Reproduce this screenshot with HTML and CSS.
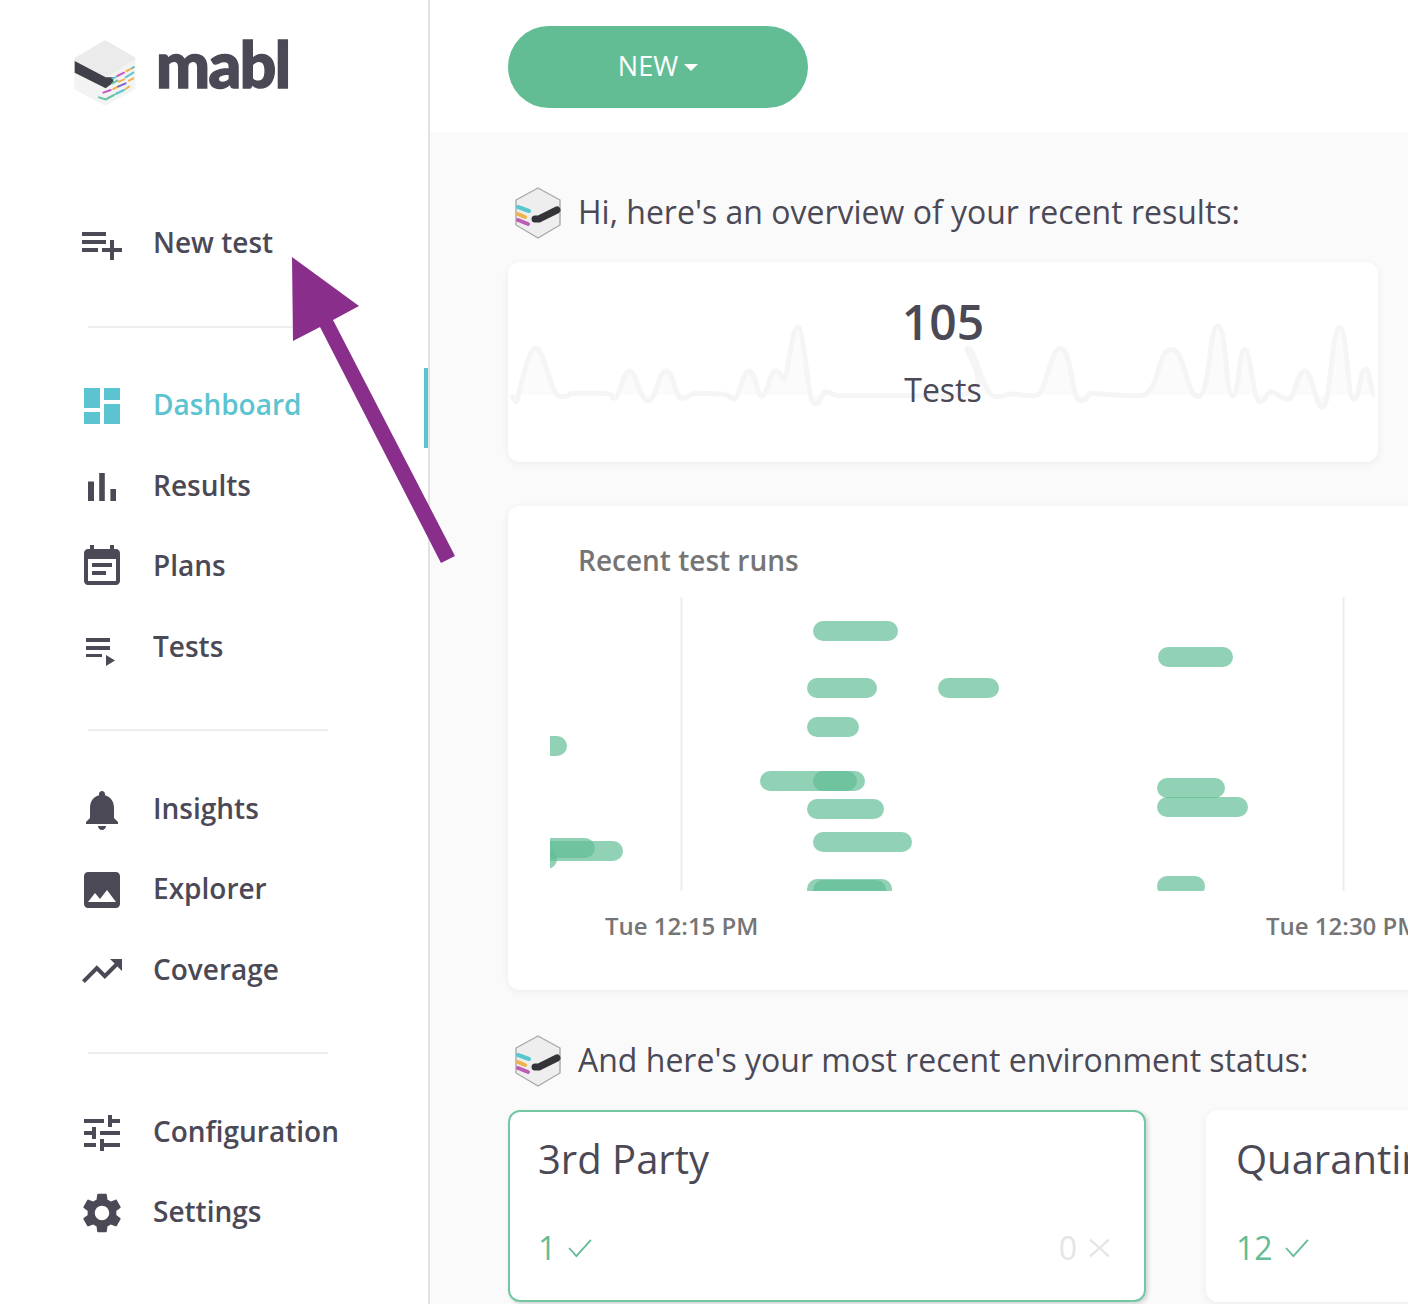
FILE: index.html
```html
<!DOCTYPE html>
<html lang="en">
<head>
<meta charset="utf-8">
<title>mabl dashboard</title>
<link rel="stylesheet" href="styles.css">
</head>
<body>
<div class="app">
  <aside class="sidebar">
    <div class="brand">
      <svg class="brand-cube" viewBox="40 60 186 198">
        <path class="cube-body" d="M133 65 220 115V205L133 253 45 205V115Z" stroke-linejoin="round"/>
        <path class="cube-top" d="M133 65 220 115 133 170 45 120Z" stroke-linejoin="round"/>
        <path class="cube-band" d="M42 123 135 172H158V188L135 205 42 158Z"/>
        <g class="dashes" stroke-width="6" stroke-linecap="round">
          <path stroke="#c95bc1" d="M170 168 190 158M128 218 150 210"/>
          <path stroke="#f2b24c" d="M198 153 208 148M175 185 190 178M205 182 218 175M158 207 168 202M195 207 205 200"/>
          <path stroke="#66c2a0" d="M213 145 220 141M155 190 170 182M115 232 135 238 160 225"/>
          <path stroke="#5cc6d0" d="M155 175 165 172M195 172 218 158M165 222 190 210"/>
          <path stroke="#7a66cc" d="M172 200 195 190"/>
        </g>
      </svg>
      <span class="brand-name">mabl</span>
    </div>

    <nav class="nav">
      <a class="nav-item"><svg class="nav-icon" viewBox="0 0 24 24"><path d="M14 10H2v2h12v-2zm0-4H2v2h12V6zm4 8v-4h-2v4h-4v2h4v4h2v-4h4v-2h-4zM2 16h8v-2H2v2z"/></svg><span>New test</span></a>
      <div class="nav-divider"></div>
      <a class="nav-item active"><svg class="nav-icon" viewBox="0 0 24 24"><path d="M3 13h8V3H3v10zm0 8h8v-6H3v6zm10 0h8V11h-8v10zm0-18v6h8V3h-8z"/></svg><span>Dashboard</span></a>
      <a class="nav-item"><svg class="nav-icon" viewBox="0 0 24 24"><path d="M5 9.2h3V19H5zM10.6 5h2.8v14h-2.8zm5.6 8H19v6h-2.8z"/></svg><span>Results</span></a>
      <a class="nav-item"><svg class="nav-icon" viewBox="0 0 24 24"><path d="M17 10H7v2h10v-2zm2-7h-1V1h-2v2H8V1H6v2H5c-1.11 0-1.99.9-1.99 2L3 19c0 1.1.89 2 2 2h14c1.1 0 2-.9 2-2V5c0-1.1-.9-2-2-2zm0 16H5V8h14v11zm-5-5H7v2h7v-2z"/></svg><span>Plans</span></a>
      <a class="nav-item"><svg class="nav-icon" viewBox="0 0 48 48"><path d="M8 14h24v4H8zM8 22h24v4H8zM8 30h16v3H8zM28 31l9 5.5-9 5.5z"/></svg><span>Tests</span></a>
      <div class="nav-divider"></div>
      <a class="nav-item"><svg class="nav-icon" viewBox="0 0 24 24"><path d="M12 22c1.1 0 2-.9 2-2h-4c0 1.1.89 2 2 2zm6-6v-5c0-3.07-1.64-5.64-4.5-6.32V4c0-.83-.67-1.5-1.5-1.5s-1.5.67-1.5 1.5v.68C7.63 5.36 6 7.92 6 11v5l-2 2v1h16v-1l-2-2z"/></svg><span>Insights</span></a>
      <a class="nav-item"><svg class="nav-icon" viewBox="0 0 24 24"><path d="M21 19V5c0-1.1-.9-2-2-2H5c-1.1 0-2 .9-2 2v14c0 1.1.9 2 2 2h14c1.1 0 2-.9 2-2zM8.5 13.5l2.5 3.01L14.5 12l4.5 6H5l3.5-4.5z"/></svg><span>Explorer</span></a>
      <a class="nav-item"><svg class="nav-icon" viewBox="0 0 24 24"><path d="M16 6l2.29 2.29-4.88 4.88-4-4L2 16.59 3.41 18l6-6 4 4 6.3-6.29L22 12V6z"/></svg><span>Coverage</span></a>
      <div class="nav-divider"></div>
      <a class="nav-item"><svg class="nav-icon" viewBox="0 0 24 24"><path d="M3 17v2h6v-2H3zM3 5v2h10V5H3zm10 16v-2h8v-2h-8v-2h-2v6h2zM7 9v2H3v2h4v2h2V9H7zm14 4v-2H11v2h10zm-6-4h2V7h4V5h-4V3h-2v6z"/></svg><span>Configuration</span></a>
      <a class="nav-item"><svg class="nav-icon" viewBox="0 0 24 24"><path d="M19.14 12.94c.04-.3.06-.61.06-.94 0-.32-.02-.64-.07-.94l2.03-1.58c.18-.14.23-.41.12-.61l-1.92-3.32c-.12-.22-.37-.29-.59-.22l-2.39.96c-.5-.38-1.03-.7-1.62-.94l-.36-2.54c-.04-.24-.24-.41-.48-.41h-3.84c-.24 0-.43.17-.47.41l-.36 2.54c-.59.24-1.13.57-1.62.94l-2.39-.96c-.22-.08-.47 0-.59.22L2.74 8.87c-.12.21-.08.47.12.61l2.03 1.58c-.05.3-.09.63-.09.94s.02.64.07.94l-2.03 1.58c-.18.14-.23.41-.12.61l1.92 3.32c.12.22.37.29.59.22l2.39-.96c.5.38 1.03.7 1.62.94l.36 2.54c.05.24.24.41.48.41h3.84c.24 0 .44-.17.47-.41l.36-2.54c.59-.24 1.13-.56 1.62-.94l2.39.96c.22.08.47 0 .59-.22l1.92-3.32c.12-.22.07-.47-.12-.61l-2.01-1.58zM12 15.6c-1.98 0-3.6-1.62-3.6-3.6s1.62-3.6 3.6-3.6 3.6 1.62 3.6 3.6-1.62 3.6-3.6 3.6z"/></svg><span>Settings</span></a>
    </nav>
  </aside>

  <main class="main">
    <header class="topbar">
      <button class="new-btn"><span class="new-label">NEW</span><span class="caret"></span></button>
    </header>

    <section class="content">
      <div class="greeting">
        <svg class="mascot" viewBox="0 0 46 52">
          <path class="mascot-hex" d="M23 1 45 13V38L23 51 1 38V13Z" stroke-linejoin="round"/>
          <g fill="none" stroke-linecap="round">
            <path stroke="#5cc6d0" stroke-width="4" d="M3 20 14 24"/>
            <path stroke="#f2b24c" stroke-width="4" d="M3 27 10 30"/>
            <path stroke="#c05bb5" stroke-width="4" d="M3 33 13 37"/>
            <path stroke="#333338" stroke-width="7" d="M20 32H24L42 23"/>
          </g>
        </svg>
        <h2>Hi, here's an overview of your recent results:</h2>
      </div>

      <div class="card summary">
        <svg class="spark" viewBox="0 0 1568 510" preserveAspectRatio="none">
          <path class="spark-line" d="M12 285S16 305 20 305S39 145 55 145S80 290 100 290S111 280 120 280S150 280 175 280S186 295 195 295S210 213 222 213S240 302 255 302S273 213 287 213S302 295 315 295S329 280 340 280S365 282 385 282S398 297 408 297S423 213 435 213S448 288 458 288S471 213 482 213S490 235 497 235S511 80 522 80S539 312 552 312S563 275 572 275S585 287 595 287S700 287 795 287S812 145 825 145S852 290 875 290S889 282 900 282S925 287 945 287S970 145 990 145S1009 302 1025 302S1036 280 1045 280S1092 287 1130 287S1161 148 1187 148S1213 290 1235 290S1254 78 1270 78S1284 288 1296 288S1308 148 1318 148S1333 305 1345 305S1356 275 1365 275S1382 297 1395 297S1411 213 1425 213S1443 322 1457 322S1473 82 1487 82S1501 298 1512 298S1523 208 1533 208S1542 285 1550 285"/>
        </svg>
        <div class="summary-num">105</div>
        <div class="summary-label">Tests</div>
      </div>

      <div class="card runs">
        <h3>Recent test runs</h3>
        <svg class="runs-chart" width="858" height="294" viewBox="550 597 858 294">
          <path class="grid" d="M681.5 597V891M1343.5 597V891"/>
          <g class="run-bars">
            <rect x="813" y="621" width="85" height="20" rx="10"/>
            <rect x="807" y="678" width="70" height="20" rx="10"/>
            <rect x="938" y="678" width="61" height="20" rx="10"/>
            <rect x="807" y="717" width="52" height="20" rx="10"/>
            <rect x="530" y="736" width="37" height="20" rx="10"/>
            <rect x="760" y="771" width="105" height="20" rx="10"/>
            <rect x="813" y="771" width="44" height="20" rx="10"/>
            <rect x="807" y="799" width="77" height="20" rx="10"/>
            <rect x="813" y="832" width="99" height="20" rx="10"/>
            <rect x="530" y="838" width="65" height="20" rx="10"/>
            <rect x="530" y="841" width="93" height="20" rx="10"/>
            <rect x="530" y="849" width="27" height="20" rx="10"/>
            <rect x="807" y="879" width="85" height="20" rx="10"/>
            <rect x="813" y="880" width="73" height="20" rx="10"/>
            <rect x="1158" y="647" width="75" height="20" rx="10"/>
            <rect x="1157" y="778" width="68" height="20" rx="10"/>
            <rect x="1157" y="797" width="91" height="20" rx="10"/>
            <rect x="1157" y="876" width="48" height="20" rx="10"/>
          </g>
        </svg>
        <div class="axis">
          <span class="tick first">Tue 12:15 PM</span>
          <span class="tick second">Tue 12:30 PM</span>
        </div>
      </div>

      <div class="greeting second-greeting">
        <svg class="mascot" viewBox="0 0 46 52">
          <path class="mascot-hex" d="M23 1 45 13V38L23 51 1 38V13Z" stroke-linejoin="round"/>
          <g fill="none" stroke-linecap="round">
            <path stroke="#5cc6d0" stroke-width="4" d="M3 20 14 24"/>
            <path stroke="#f2b24c" stroke-width="4" d="M3 27 10 30"/>
            <path stroke="#c05bb5" stroke-width="4" d="M3 33 13 37"/>
            <path stroke="#333338" stroke-width="7" d="M20 32H24L42 23"/>
          </g>
        </svg>
        <h2>And here's your most recent environment status:</h2>
      </div>

      <div class="envs">
        <div class="card env selected">
          <div class="env-name">3rd Party</div>
          <div class="env-counts">
            <span class="pass">1<svg class="mark" viewBox="0 0 26 22"><path d="M1 11 9 20 25 2"/></svg></span>
            <span class="fail">0<svg class="mark" viewBox="0 0 20 18"><path d="M1 1 19 17M19 1 1 17"/></svg></span>
          </div>
        </div>
        <div class="card env">
          <div class="env-name">Quarantine</div>
          <div class="env-counts">
            <span class="pass">12<svg class="mark" viewBox="0 0 26 22"><path d="M1 11 9 20 25 2"/></svg></span>
          </div>
        </div>
      </div>
    </section>
  </main>
</div>

<svg class="arrow" width="170" height="320" viewBox="290 250 170 320">
  <path d="M292 257 359 306 333 320 455 556 441 563 320 327 293 341Z"/>
</svg>
</body>
</html>
```

FILE: styles.css
```css
* { box-sizing: border-box; }

html, body {
  margin: 0;
  height: 1304px;
  overflow: hidden;
  background: #fff;
  color: #4b4956;
  font-family: "Open Sans", sans-serif;
}

.app {
  display: flex;
  height: 1304px;
}

/* Sidebar */
.sidebar {
  flex: 0 0 430px;
  border-right: 2px solid #e2e2e2;
  background: #fff;
}

.brand {
  display: flex;
  align-items: flex-start;
  gap: 20px;
  height: 134px;
  padding: 40px 0 0 74px;
}

.brand-cube { width: 62px; height: 66px; flex: none; }
.cube-body { fill: #f3f3f3; stroke: #f3f3f3; stroke-width: 8; }
.cube-top { fill: #ebebeb; stroke: #ebebeb; stroke-width: 8; }
.cube-band { fill: #40404a; }
.dashes { fill: none; }

.brand-name {
  margin-top: -8px;
  font-family: Lato, sans-serif;
  font-weight: 900;
  font-size: 64px;
  line-height: 64px;
  letter-spacing: -1.5px;
  -webkit-text-stroke: 1.5px #4b4956;
  color: #4b4956;
}

.nav {
  display: flex;
  flex-direction: column;
  padding-top: 70px;
}

.nav-item {
  display: flex;
  align-items: center;
  gap: 27px;
  height: 80.67px;
  padding-left: 78px;
  font-size: 28px;
  font-weight: 600;
  color: #4b4956;
  position: relative;
}

.nav-item span { position: relative; top: -2px; }

.nav-icon {
  width: 48px;
  height: 48px;
  flex: none;
  fill: #4b4956;
}

.nav-item.active { color: #5cc4d0; }
.nav-item.active .nav-icon { fill: #5cc4d0; }
.nav-item.active::after {
  content: "";
  position: absolute;
  right: 0;
  top: 2px;
  width: 4px;
  height: 80px;
  background: #5cc4d0;
}

.nav-divider {
  width: 240px;
  height: 2px;
  margin: 41px 0 38px 88px;
  background: #eeeeee;
  flex: none;
}

/* Main */
.main {
  flex: 1;
  min-width: 0;
  overflow: hidden;
  display: flex;
  flex-direction: column;
}

.topbar {
  flex: 0 0 132px;
  padding: 26px 0 0 78px;
  background: #fff;
}

.new-btn {
  display: flex;
  align-items: center;
  justify-content: center;
  gap: 6px;
  width: 300px;
  height: 82px;
  border: 0;
  border-radius: 41px;
  background: #62bd95;
  color: #fff;
  font-family: "Open Sans", sans-serif;
  font-size: 27px;
  font-weight: 400;
}

.new-label { position: relative; top: -2px; }

.caret {
  width: 0;
  height: 0;
  border-left: 7px solid transparent;
  border-right: 7px solid transparent;
  border-top: 7px solid #fff;
}

.content {
  flex: 1;
  padding: 55px 0 0 78px;
  background: #fafafa;
}

.greeting {
  display: flex;
  align-items: center;
  gap: 17px;
  height: 52px;
  padding-left: 7px;
  margin-bottom: 23px;
}

.second-greeting { margin-top: 45px; }

.mascot { width: 46px; height: 52px; flex: none; }
.mascot-hex { fill: #eeeeee; stroke: #a9a9a9; stroke-width: 1.4; }

.greeting h2 {
  margin: -2px 0 0;
  font-size: 32px;
  font-weight: 400;
  line-height: 52px;
  white-space: nowrap;
  color: #4b4956;
}

.card {
  background: #fff;
  border-radius: 12px;
  box-shadow: 0 2px 8px rgba(0, 0, 0, .06);
}

.summary {
  position: relative;
  width: 870px;
  height: 200px;
  text-align: center;
}

.spark {
  position: absolute;
  left: -3px;
  top: 38px;
  width: 880px;
  height: 170px;
}

.spark-line {
  fill: #fbfbfb;
  stroke: #f5f5f5;
  stroke-width: 5px;
  stroke-linejoin: round;
  vector-effect: non-scaling-stroke;
}

.summary-num {
  position: relative;
  padding-top: 27px;
  font-size: 48px;
  line-height: 66px;
  font-weight: 600;
}

.summary-label {
  position: relative;
  margin-top: 13px;
  font-size: 32px;
  line-height: 44px;
}

.runs {
  width: 1000px;
  height: 484px;
  margin-top: 44px;
  padding-top: 34px;
}

.runs h3 {
  margin: 0 0 0 70px;
  font-size: 28px;
  line-height: 40px;
  font-weight: 600;
  color: #757575;
}

.runs-chart {
  display: block;
  margin: 17px 0 0 42px;
}

.grid { stroke: #eeeeee; stroke-width: 2; fill: none; }
.run-bars rect { fill: #62bd95; opacity: .7; }

.axis {
  position: relative;
  height: 40px;
  margin-top: 15px;
}

.tick {
  position: absolute;
  top: 0;
  font-size: 24px;
  line-height: 40px;
  font-weight: 600;
  color: #757575;
  white-space: nowrap;
}

.tick.first { left: 97px; }
.tick.second { left: 758px; }

.envs {
  display: flex;
  gap: 60px;
}

.env {
  flex: 0 0 640px;
  height: 192px;
  padding: 20px 34px 0 28px;
  border: 2px solid transparent;
}

.env.selected {
  flex-basis: 638px;
  border-color: #73c7a3;
  box-shadow: 2px 2px 4px rgba(0, 0, 0, .16);
}

.env-name {
  font-size: 40px;
  line-height: 54px;
  white-space: nowrap;
}

.env-counts {
  display: flex;
  justify-content: space-between;
  margin-top: 40px;
  font-size: 32px;
  line-height: 44px;
}

.pass, .fail {
  display: flex;
  align-items: center;
}

.pass { color: #62bd95; gap: 11px; }
.fail { color: #e5e5e5; gap: 12px; }

.mark {
  fill: none;
  stroke-width: 2;
  height: 20px;
}

.pass .mark { width: 26px; stroke: #62bd95; }
.fail .mark { width: 21px; stroke: #e5e5e5; }

/* Annotation drawn over the screenshot */
.arrow {
  position: absolute;
  left: 290px;
  top: 250px;
}

.arrow path { fill: #8a2e8c; }
```
